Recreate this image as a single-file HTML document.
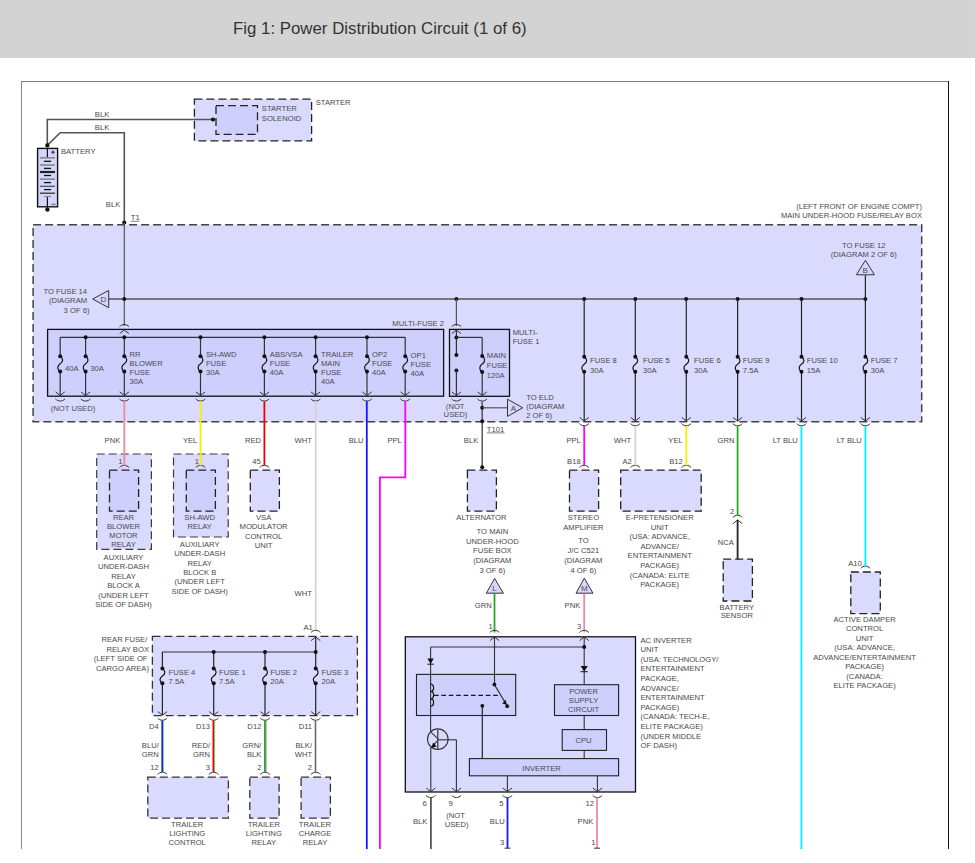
<!DOCTYPE html>
<html><head><meta charset="utf-8"><title>Fig 1: Power Distribution Circuit</title>
<style>html,body{margin:0;padding:0;background:#fff;width:975px;height:863px;overflow:hidden;position:relative;font-family:"Liberation Sans",sans-serif}</style>
</head><body>
<svg width="975" height="863" viewBox="0 0 975 863" style="position:absolute;left:0;top:0" font-family="Liberation Sans, sans-serif">
<defs><clipPath id="c"><rect x="0" y="0" width="975" height="849"/></clipPath></defs>
<rect x="0" y="0" width="975" height="58" fill="#d3d3d3"/>
<text x="233" y="33.8" font-size="16.84" fill="#333">Fig 1: Power Distribution Circuit (1 of 6)</text>
<rect x="21" y="81" width="1" height="768" fill="#8a8a8a"/>
<rect x="21" y="81" width="928" height="1" fill="#7a7a7a"/>
<rect x="948" y="81" width="1" height="768" fill="#111"/>
<g clip-path="url(#c)">
<rect x="194.4" y="99.2" width="117.2" height="41.6" fill="#dadafe" stroke="#222" stroke-width="1.3" stroke-dasharray="8 4"/>
<rect x="216" y="105.7" width="41.5" height="28.6" fill="#cfcffe" stroke="#222" stroke-width="1.3" stroke-dasharray="8 4"/>
<text x="315.7" y="104.8" font-size="7.65" fill="#4a4a4a">STARTER</text>
<text x="261.8" y="110.9" font-size="7.65" fill="#4a4a4a">STARTER</text>
<text x="261.8" y="120.8" font-size="7.65" fill="#4a4a4a">SOLENOID</text>
<polyline points="47.3,145.4 47.3,119.5 213,119.5" fill="none" stroke="#555" stroke-width="1.6"/>
<polyline points="47.3,145.4 60.2,132.8 124.3,132.8 124.3,222.5" fill="none" stroke="#555" stroke-width="1.6"/>
<circle cx="47.3" cy="145.4" r="2.1" fill="#111"/>
<circle cx="213" cy="119.5" r="2.1" fill="#111"/>
<text x="94.8" y="116.8" font-size="7.65" fill="#4a4a4a">BLK</text>
<text x="94.8" y="129.7" font-size="7.65" fill="#4a4a4a">BLK</text>
<text x="105.8" y="206.9" font-size="7.65" fill="#4a4a4a">BLK</text>
<text x="130.8" y="220" font-size="7.65" fill="#4a4a4a">T1</text>
<line x1="130.8" y1="221.3" x2="139.5" y2="221.3" stroke="#4a4a4a" stroke-width="0.7"/>
<circle cx="124.3" cy="222.5" r="2.1" fill="#111"/>
<rect x="37.6" y="148.4" width="20" height="58.4" fill="#d6d6fc" stroke="#111" stroke-width="1.4"/>
<line x1="47.4" y1="148.4" x2="47.4" y2="157.8" stroke="#111" stroke-width="1.2"/>
<line x1="47.4" y1="196.5" x2="47.4" y2="206.8" stroke="#111" stroke-width="1.2"/>
<line x1="40" y1="157.8" x2="55" y2="157.8" stroke="#888" stroke-width="1.6"/>
<line x1="40" y1="165" x2="55" y2="165" stroke="#888" stroke-width="1.6"/>
<line x1="40" y1="172" x2="55" y2="172" stroke="#222" stroke-width="2.2"/>
<line x1="40" y1="179.1" x2="55" y2="179.1" stroke="#888" stroke-width="1.6"/>
<line x1="40" y1="186.3" x2="55" y2="186.3" stroke="#555" stroke-width="1.3"/>
<line x1="40" y1="193.2" x2="55" y2="193.2" stroke="#333" stroke-width="1.3"/>
<line x1="43.9" y1="161.3" x2="51.1" y2="161.3" stroke="#111" stroke-width="1.3"/>
<line x1="43.9" y1="168.4" x2="51.1" y2="168.4" stroke="#111" stroke-width="1.3"/>
<line x1="43.9" y1="175.5" x2="51.1" y2="175.5" stroke="#111" stroke-width="1.3"/>
<line x1="43.9" y1="182.6" x2="51.1" y2="182.6" stroke="#111" stroke-width="1.3"/>
<line x1="43.9" y1="189.6" x2="51.1" y2="189.6" stroke="#111" stroke-width="1.3"/>
<line x1="43.9" y1="196.5" x2="51.1" y2="196.5" stroke="#888" stroke-width="1.2"/>
<line x1="51" y1="152.2" x2="55" y2="152.2" stroke="#222" stroke-width="0.9"/>
<line x1="53" y1="150.2" x2="53" y2="154.2" stroke="#222" stroke-width="0.9"/>
<line x1="51.5" y1="204.3" x2="55.5" y2="204.3" stroke="#555" stroke-width="1"/>
<line x1="47.4" y1="206.8" x2="47.4" y2="209.6" stroke="#111" stroke-width="1.2"/>
<circle cx="47.4" cy="209.6" r="2.2" fill="#111"/>
<text x="61" y="153.7" font-size="7.65" fill="#4a4a4a">BATTERY</text>
<text x="922" y="209.2" text-anchor="end" font-size="7.65" fill="#4a4a4a">(LEFT FRONT OF ENGINE COMPT)</text>
<text x="922" y="217.7" text-anchor="end" font-size="7.65" fill="#4a4a4a">MAIN UNDER-HOOD FUSE/RELAY BOX</text>
<rect x="33.1" y="224.8" width="888.6" height="197" fill="#dadafe" stroke="#444" stroke-width="1.5" stroke-dasharray="8 4"/>
<line x1="124.3" y1="222.5" x2="124.3" y2="326" stroke="#555" stroke-width="1.2"/>
<text x="863.8" y="247.7" text-anchor="middle" font-size="7.65" fill="#4a4a4a">TO FUSE 12</text>
<text x="863.8" y="256.7" text-anchor="middle" font-size="7.65" fill="#4a4a4a">(DIAGRAM 2 OF 6)</text>
<line x1="108.7" y1="299" x2="865.4" y2="299" stroke="#555" stroke-width="1.3"/>
<polygon points="865.4,260.3 856.4,274.8 874.4,274.8" fill="#d6d6fc" stroke="#333" stroke-width="1"/>
<text x="865.2" y="273" text-anchor="middle" font-size="8" fill="#4a4a4a">B</text>
<polygon points="92.7,299 108.7,290.4 108.7,307.7" fill="#d6d6fc" stroke="#333" stroke-width="1"/>
<text x="103.3" y="302" text-anchor="middle" font-size="8" fill="#4a4a4a">D</text>
<text x="43.5" y="293.9" font-size="7.65" fill="#4a4a4a">TO FUSE 14</text>
<text x="48.9" y="303.2" font-size="7.65" fill="#4a4a4a">(DIAGRAM</text>
<text x="63.6" y="312.6" font-size="7.65" fill="#4a4a4a">3 OF 6)</text>
<circle cx="124.3" cy="299" r="2" fill="#111"/>
<circle cx="456.4" cy="299" r="2" fill="#111"/>
<circle cx="584.2" cy="299" r="2" fill="#111"/>
<circle cx="635.3" cy="299" r="2" fill="#111"/>
<circle cx="686.1" cy="299" r="2" fill="#111"/>
<circle cx="737.6" cy="299" r="2" fill="#111"/>
<circle cx="801.5" cy="299" r="2" fill="#111"/>
<circle cx="865.4" cy="299" r="2" fill="#111"/>
<rect x="47.6" y="329.4" width="396" height="66.8" fill="#cfcffe" stroke="#111" stroke-width="1.3"/>
<text x="444" y="326" text-anchor="end" font-size="7.65" fill="#4a4a4a">MULTI-FUSE 2</text>
<line x1="60.2" y1="337.3" x2="405.2" y2="337.3" stroke="#333" stroke-width="1.2"/>
<line x1="60.2" y1="337.3" x2="60.2" y2="356.2" stroke="#333" stroke-width="1.2"/>
<line x1="60.2" y1="371.5" x2="60.2" y2="395.5" stroke="#333" stroke-width="1.2"/>
<circle cx="60.2" cy="356.2" r="2" fill="#111"/>
<circle cx="60.2" cy="371.5" r="2" fill="#111"/>
<path d="M60.2,356.2 C63.400000000000006,358.2 63.400000000000006,361.85 60.2,363.85 C57.0,365.85 57.0,369.5 60.2,371.5" fill="none" stroke="#111" stroke-width="1.2"/>
<polyline points="55.6,391.9 60.2,395.5 64.8,391.9" fill="none" stroke="#333" stroke-width="1"/>
<path d="M55.400000000000006,398.8 C57.800000000000004,401.79 62.6,401.79 65.0,398.8" fill="none" stroke="#333" stroke-width="1"/>
<line x1="85.6" y1="337.3" x2="85.6" y2="356.2" stroke="#333" stroke-width="1.2"/>
<line x1="85.6" y1="371.5" x2="85.6" y2="395.5" stroke="#333" stroke-width="1.2"/>
<circle cx="85.6" cy="356.2" r="2" fill="#111"/>
<circle cx="85.6" cy="371.5" r="2" fill="#111"/>
<path d="M85.6,356.2 C88.8,358.2 88.8,361.85 85.6,363.85 C82.39999999999999,365.85 82.39999999999999,369.5 85.6,371.5" fill="none" stroke="#111" stroke-width="1.2"/>
<polyline points="81.0,391.9 85.6,395.5 90.19999999999999,391.9" fill="none" stroke="#333" stroke-width="1"/>
<path d="M80.8,398.8 C83.19999999999999,401.79 88.0,401.79 90.39999999999999,398.8" fill="none" stroke="#333" stroke-width="1"/>
<circle cx="85.6" cy="337.3" r="2" fill="#111"/>
<line x1="124.3" y1="337.3" x2="124.3" y2="356.2" stroke="#333" stroke-width="1.2"/>
<line x1="124.3" y1="371.5" x2="124.3" y2="395.5" stroke="#333" stroke-width="1.2"/>
<circle cx="124.3" cy="356.2" r="2" fill="#111"/>
<circle cx="124.3" cy="371.5" r="2" fill="#111"/>
<path d="M124.3,356.2 C127.5,358.2 127.5,361.85 124.3,363.85 C121.1,365.85 121.1,369.5 124.3,371.5" fill="none" stroke="#111" stroke-width="1.2"/>
<polyline points="119.7,391.9 124.3,395.5 128.9,391.9" fill="none" stroke="#333" stroke-width="1"/>
<path d="M119.5,398.8 C121.89999999999999,401.79 126.7,401.79 129.1,398.8" fill="none" stroke="#333" stroke-width="1"/>
<circle cx="124.3" cy="337.3" r="2" fill="#111"/>
<line x1="200.5" y1="337.3" x2="200.5" y2="356.2" stroke="#333" stroke-width="1.2"/>
<line x1="200.5" y1="371.5" x2="200.5" y2="395.5" stroke="#333" stroke-width="1.2"/>
<circle cx="200.5" cy="356.2" r="2" fill="#111"/>
<circle cx="200.5" cy="371.5" r="2" fill="#111"/>
<path d="M200.5,356.2 C203.7,358.2 203.7,361.85 200.5,363.85 C197.3,365.85 197.3,369.5 200.5,371.5" fill="none" stroke="#111" stroke-width="1.2"/>
<polyline points="195.9,391.9 200.5,395.5 205.1,391.9" fill="none" stroke="#333" stroke-width="1"/>
<path d="M195.7,398.8 C198.1,401.79 202.9,401.79 205.3,398.8" fill="none" stroke="#333" stroke-width="1"/>
<circle cx="200.5" cy="337.3" r="2" fill="#111"/>
<line x1="264.4" y1="337.3" x2="264.4" y2="356.2" stroke="#333" stroke-width="1.2"/>
<line x1="264.4" y1="371.5" x2="264.4" y2="395.5" stroke="#333" stroke-width="1.2"/>
<circle cx="264.4" cy="356.2" r="2" fill="#111"/>
<circle cx="264.4" cy="371.5" r="2" fill="#111"/>
<path d="M264.4,356.2 C267.59999999999997,358.2 267.59999999999997,361.85 264.4,363.85 C261.2,365.85 261.2,369.5 264.4,371.5" fill="none" stroke="#111" stroke-width="1.2"/>
<polyline points="259.79999999999995,391.9 264.4,395.5 269.0,391.9" fill="none" stroke="#333" stroke-width="1"/>
<path d="M259.59999999999997,398.8 C262.0,401.79 266.79999999999995,401.79 269.2,398.8" fill="none" stroke="#333" stroke-width="1"/>
<circle cx="264.4" cy="337.3" r="2" fill="#111"/>
<line x1="315.6" y1="337.3" x2="315.6" y2="356.2" stroke="#333" stroke-width="1.2"/>
<line x1="315.6" y1="371.5" x2="315.6" y2="395.5" stroke="#333" stroke-width="1.2"/>
<circle cx="315.6" cy="356.2" r="2" fill="#111"/>
<circle cx="315.6" cy="371.5" r="2" fill="#111"/>
<path d="M315.6,356.2 C318.8,358.2 318.8,361.85 315.6,363.85 C312.40000000000003,365.85 312.40000000000003,369.5 315.6,371.5" fill="none" stroke="#111" stroke-width="1.2"/>
<polyline points="311.0,391.9 315.6,395.5 320.20000000000005,391.9" fill="none" stroke="#333" stroke-width="1"/>
<path d="M310.8,398.8 C313.20000000000005,401.79 318.0,401.79 320.40000000000003,398.8" fill="none" stroke="#333" stroke-width="1"/>
<circle cx="315.6" cy="337.3" r="2" fill="#111"/>
<line x1="367" y1="337.3" x2="367" y2="356.2" stroke="#333" stroke-width="1.2"/>
<line x1="367" y1="371.5" x2="367" y2="395.5" stroke="#333" stroke-width="1.2"/>
<circle cx="367" cy="356.2" r="2" fill="#111"/>
<circle cx="367" cy="371.5" r="2" fill="#111"/>
<path d="M367,356.2 C370.2,358.2 370.2,361.85 367,363.85 C363.8,365.85 363.8,369.5 367,371.5" fill="none" stroke="#111" stroke-width="1.2"/>
<polyline points="362.4,391.9 367,395.5 371.6,391.9" fill="none" stroke="#333" stroke-width="1"/>
<path d="M362.2,398.8 C364.6,401.79 369.4,401.79 371.8,398.8" fill="none" stroke="#333" stroke-width="1"/>
<circle cx="367" cy="337.3" r="2" fill="#111"/>
<line x1="405.2" y1="337.3" x2="405.2" y2="356.2" stroke="#333" stroke-width="1.2"/>
<line x1="405.2" y1="371.5" x2="405.2" y2="395.5" stroke="#333" stroke-width="1.2"/>
<circle cx="405.2" cy="356.2" r="2" fill="#111"/>
<circle cx="405.2" cy="371.5" r="2" fill="#111"/>
<path d="M405.2,356.2 C408.4,358.2 408.4,361.85 405.2,363.85 C402.0,365.85 402.0,369.5 405.2,371.5" fill="none" stroke="#111" stroke-width="1.2"/>
<polyline points="400.59999999999997,391.9 405.2,395.5 409.8,391.9" fill="none" stroke="#333" stroke-width="1"/>
<path d="M400.4,398.8 C402.8,401.79 407.59999999999997,401.79 410.0,398.8" fill="none" stroke="#333" stroke-width="1"/>
<path d="M119.5,326.8 C121.89999999999999,323.81 126.7,323.81 129.1,326.8" fill="none" stroke="#333" stroke-width="1"/>
<polyline points="119.7,333.6 124.3,330 128.9,333.6" fill="none" stroke="#333" stroke-width="1"/>
<text x="64.9" y="371" font-size="7.65" fill="#4a4a4a">40A</text>
<text x="90.2" y="371" font-size="7.65" fill="#4a4a4a">30A</text>
<text x="129.6" y="356.6" font-size="7.65" fill="#4a4a4a">RR</text>
<text x="129.6" y="365.8" font-size="7.65" fill="#4a4a4a">BLOWER</text>
<text x="129.6" y="375.0" font-size="7.65" fill="#4a4a4a">FUSE</text>
<text x="129.6" y="384.2" font-size="7.65" fill="#4a4a4a">30A</text>
<text x="205.9" y="356.6" font-size="7.65" fill="#4a4a4a">SH-AWD</text>
<text x="205.9" y="365.8" font-size="7.65" fill="#4a4a4a">FUSE</text>
<text x="205.9" y="375.0" font-size="7.65" fill="#4a4a4a">30A</text>
<text x="269.8" y="356.8" font-size="7.65" fill="#4a4a4a">ABS/VSA</text>
<text x="269.8" y="365.9" font-size="7.65" fill="#4a4a4a">FUSE</text>
<text x="269.8" y="375.0" font-size="7.65" fill="#4a4a4a">40A</text>
<text x="321" y="356.8" font-size="7.65" fill="#4a4a4a">TRAILER</text>
<text x="321" y="365.9" font-size="7.65" fill="#4a4a4a">MAIN</text>
<text x="321" y="375.0" font-size="7.65" fill="#4a4a4a">FUSE</text>
<text x="321" y="384.1" font-size="7.65" fill="#4a4a4a">40A</text>
<text x="372" y="356.8" font-size="7.65" fill="#4a4a4a">OP2</text>
<text x="372" y="365.9" font-size="7.65" fill="#4a4a4a">FUSE</text>
<text x="372" y="375.0" font-size="7.65" fill="#4a4a4a">40A</text>
<text x="410.6" y="358.0" font-size="7.65" fill="#4a4a4a">OP1</text>
<text x="410.6" y="367.2" font-size="7.65" fill="#4a4a4a">FUSE</text>
<text x="410.6" y="376.4" font-size="7.65" fill="#4a4a4a">40A</text>
<text x="50.8" y="410.8" font-size="7.65" fill="#4a4a4a">(NOT USED)</text>
<rect x="449.5" y="329.4" width="60" height="66.9" fill="#cfcffe" stroke="#111" stroke-width="1.3"/>
<text x="512.7" y="335.1" font-size="7.65" fill="#4a4a4a">MULTI-</text>
<text x="512.7" y="343.8" font-size="7.65" fill="#4a4a4a">FUSE 1</text>
<line x1="456.4" y1="299" x2="456.4" y2="326" stroke="#555" stroke-width="1.2"/>
<path d="M451.59999999999997,326.8 C454.0,323.81 458.79999999999995,323.81 461.2,326.8" fill="none" stroke="#333" stroke-width="1"/>
<polyline points="451.79999999999995,333.6 456.4,330 461.0,333.6" fill="none" stroke="#333" stroke-width="1"/>
<line x1="456.4" y1="330" x2="456.4" y2="355" stroke="#333" stroke-width="1.2"/>
<circle cx="456.4" cy="337.4" r="2" fill="#111"/>
<circle cx="456.4" cy="355" r="2" fill="#111"/>
<circle cx="456.4" cy="370.6" r="2" fill="#111"/>
<line x1="456.4" y1="370.6" x2="456.4" y2="395.5" stroke="#333" stroke-width="1.2"/>
<polyline points="451.79999999999995,391.9 456.4,395.5 461.0,391.9" fill="none" stroke="#333" stroke-width="1"/>
<path d="M451.59999999999997,398.8 C454.0,401.79 458.79999999999995,401.79 461.2,398.8" fill="none" stroke="#333" stroke-width="1"/>
<line x1="456.4" y1="337.4" x2="482.2" y2="337.4" stroke="#333" stroke-width="1.2"/>
<line x1="482.2" y1="337.4" x2="482.2" y2="356" stroke="#333" stroke-width="1.2"/>
<line x1="482.2" y1="371.9" x2="482.2" y2="395.5" stroke="#333" stroke-width="1.2"/>
<circle cx="482.2" cy="356" r="2" fill="#111"/>
<circle cx="482.2" cy="371.9" r="2" fill="#111"/>
<path d="M482.2,356 C485.4,358 485.4,361.95 482.2,363.95 C479.0,365.95 479.0,369.9 482.2,371.9" fill="none" stroke="#111" stroke-width="1.2"/>
<polyline points="477.59999999999997,391.9 482.2,395.5 486.8,391.9" fill="none" stroke="#333" stroke-width="1"/>
<path d="M477.4,398.8 C479.8,401.79 484.59999999999997,401.79 487.0,398.8" fill="none" stroke="#333" stroke-width="1"/>
<text x="486.8" y="358.1" font-size="7.65" fill="#4a4a4a">MAIN</text>
<text x="486.8" y="367.9" font-size="7.65" fill="#4a4a4a">FUSE</text>
<text x="486.8" y="377.7" font-size="7.65" fill="#4a4a4a">120A</text>
<text x="455.2" y="408.7" text-anchor="middle" font-size="7.65" fill="#4a4a4a">(NOT</text>
<text x="455.5" y="417.3" text-anchor="middle" font-size="7.65" fill="#4a4a4a">USED)</text>
<line x1="482.2" y1="401.4" x2="482.2" y2="467.3" stroke="#555" stroke-width="1.5"/>
<circle cx="482.2" cy="407.8" r="2" fill="#111"/>
<circle cx="482.2" cy="421.3" r="2" fill="#111"/>
<circle cx="482.2" cy="467.3" r="2" fill="#111"/>
<line x1="482.2" y1="407.8" x2="507.5" y2="407.8" stroke="#555" stroke-width="1.2"/>
<polygon points="507.5,399.2 507.5,416.4 522.7,407.8" fill="#d6d6fc" stroke="#333" stroke-width="1"/>
<text x="513.5" y="410.6" text-anchor="middle" font-size="8" fill="#4a4a4a">A</text>
<text x="526.2" y="400.0" font-size="7.65" fill="#4a4a4a">TO ELD</text>
<text x="526.2" y="409.2" font-size="7.65" fill="#4a4a4a">(DIAGRAM</text>
<text x="526.2" y="418.4" font-size="7.65" fill="#4a4a4a">2 OF 6)</text>
<text x="486.8" y="431.6" font-size="7.65" fill="#4a4a4a">T101</text>
<line x1="486.8" y1="432.9" x2="504.5" y2="432.9" stroke="#4a4a4a" stroke-width="0.7"/>
<line x1="584.2" y1="299" x2="584.2" y2="356.8" stroke="#222" stroke-width="1.2"/>
<line x1="584.2" y1="371.8" x2="584.2" y2="421" stroke="#222" stroke-width="1.2"/>
<circle cx="584.2" cy="356.8" r="2" fill="#111"/>
<circle cx="584.2" cy="371.8" r="2" fill="#111"/>
<path d="M584.2,356.8 C587.4000000000001,358.8 587.4000000000001,362.3 584.2,364.3 C581.0,366.3 581.0,369.8 584.2,371.8" fill="none" stroke="#111" stroke-width="1.2"/>
<polyline points="579.6,417.4 584.2,421 588.8000000000001,417.4" fill="none" stroke="#333" stroke-width="1"/>
<path d="M579.4000000000001,423.5 C581.8000000000001,426.49 586.6,426.49 589.0,423.5" fill="none" stroke="#333" stroke-width="1"/>
<text x="590.1" y="362.5" font-size="7.65" fill="#4a4a4a">FUSE 8</text>
<text x="590.1" y="372.6" font-size="7.65" fill="#4a4a4a">30A</text>
<line x1="635.3" y1="299" x2="635.3" y2="356.8" stroke="#222" stroke-width="1.2"/>
<line x1="635.3" y1="371.8" x2="635.3" y2="421" stroke="#222" stroke-width="1.2"/>
<circle cx="635.3" cy="356.8" r="2" fill="#111"/>
<circle cx="635.3" cy="371.8" r="2" fill="#111"/>
<path d="M635.3,356.8 C638.5,358.8 638.5,362.3 635.3,364.3 C632.0999999999999,366.3 632.0999999999999,369.8 635.3,371.8" fill="none" stroke="#111" stroke-width="1.2"/>
<polyline points="630.6999999999999,417.4 635.3,421 639.9,417.4" fill="none" stroke="#333" stroke-width="1"/>
<path d="M630.5,423.5 C632.9,426.49 637.6999999999999,426.49 640.0999999999999,423.5" fill="none" stroke="#333" stroke-width="1"/>
<text x="643" y="362.5" font-size="7.65" fill="#4a4a4a">FUSE 5</text>
<text x="643" y="372.6" font-size="7.65" fill="#4a4a4a">30A</text>
<line x1="686.3" y1="299" x2="686.3" y2="356.8" stroke="#222" stroke-width="1.2"/>
<line x1="686.3" y1="371.8" x2="686.3" y2="421" stroke="#222" stroke-width="1.2"/>
<circle cx="686.3" cy="356.8" r="2" fill="#111"/>
<circle cx="686.3" cy="371.8" r="2" fill="#111"/>
<path d="M686.3,356.8 C689.5,358.8 689.5,362.3 686.3,364.3 C683.0999999999999,366.3 683.0999999999999,369.8 686.3,371.8" fill="none" stroke="#111" stroke-width="1.2"/>
<polyline points="681.6999999999999,417.4 686.3,421 690.9,417.4" fill="none" stroke="#333" stroke-width="1"/>
<path d="M681.5,423.5 C683.9,426.49 688.6999999999999,426.49 691.0999999999999,423.5" fill="none" stroke="#333" stroke-width="1"/>
<text x="694" y="362.5" font-size="7.65" fill="#4a4a4a">FUSE 6</text>
<text x="694" y="372.6" font-size="7.65" fill="#4a4a4a">30A</text>
<line x1="737.6" y1="299" x2="737.6" y2="356.8" stroke="#222" stroke-width="1.2"/>
<line x1="737.6" y1="371.8" x2="737.6" y2="421" stroke="#222" stroke-width="1.2"/>
<circle cx="737.6" cy="356.8" r="2" fill="#111"/>
<circle cx="737.6" cy="371.8" r="2" fill="#111"/>
<path d="M737.6,356.8 C740.8000000000001,358.8 740.8000000000001,362.3 737.6,364.3 C734.4,366.3 734.4,369.8 737.6,371.8" fill="none" stroke="#111" stroke-width="1.2"/>
<polyline points="733.0,417.4 737.6,421 742.2,417.4" fill="none" stroke="#333" stroke-width="1"/>
<path d="M732.8000000000001,423.5 C735.2,426.49 740.0,426.49 742.4,423.5" fill="none" stroke="#333" stroke-width="1"/>
<text x="742.8" y="362.5" font-size="7.65" fill="#4a4a4a">FUSE 9</text>
<text x="742.8" y="372.6" font-size="7.65" fill="#4a4a4a">7.5A</text>
<line x1="801.5" y1="299" x2="801.5" y2="356.8" stroke="#222" stroke-width="1.2"/>
<line x1="801.5" y1="371.8" x2="801.5" y2="421" stroke="#222" stroke-width="1.2"/>
<circle cx="801.5" cy="356.8" r="2" fill="#111"/>
<circle cx="801.5" cy="371.8" r="2" fill="#111"/>
<path d="M801.5,356.8 C804.7,358.8 804.7,362.3 801.5,364.3 C798.3,366.3 798.3,369.8 801.5,371.8" fill="none" stroke="#111" stroke-width="1.2"/>
<polyline points="796.9,417.4 801.5,421 806.1,417.4" fill="none" stroke="#333" stroke-width="1"/>
<path d="M796.7,423.5 C799.1,426.49 803.9,426.49 806.3,423.5" fill="none" stroke="#333" stroke-width="1"/>
<text x="806.8" y="362.5" font-size="7.65" fill="#4a4a4a">FUSE 10</text>
<text x="806.8" y="372.6" font-size="7.65" fill="#4a4a4a">15A</text>
<line x1="865.4" y1="275.2" x2="865.4" y2="356.8" stroke="#222" stroke-width="1.2"/>
<line x1="865.4" y1="371.8" x2="865.4" y2="421" stroke="#222" stroke-width="1.2"/>
<circle cx="865.4" cy="356.8" r="2" fill="#111"/>
<circle cx="865.4" cy="371.8" r="2" fill="#111"/>
<path d="M865.4,356.8 C868.6,358.8 868.6,362.3 865.4,364.3 C862.1999999999999,366.3 862.1999999999999,369.8 865.4,371.8" fill="none" stroke="#111" stroke-width="1.2"/>
<polyline points="860.8,417.4 865.4,421 870.0,417.4" fill="none" stroke="#333" stroke-width="1"/>
<path d="M860.6,423.5 C863.0,426.49 867.8,426.49 870.1999999999999,423.5" fill="none" stroke="#333" stroke-width="1"/>
<text x="870.8" y="362.5" font-size="7.65" fill="#4a4a4a">FUSE 7</text>
<text x="870.8" y="372.6" font-size="7.65" fill="#4a4a4a">30A</text>
<text x="104.6" y="442.7" font-size="7.65" fill="#4a4a4a">PNK</text>
<text x="182.9" y="442.7" font-size="7.65" fill="#4a4a4a">YEL</text>
<text x="245" y="442.7" font-size="7.65" fill="#4a4a4a">RED</text>
<text x="294.6" y="442.7" font-size="7.65" fill="#4a4a4a">WHT</text>
<text x="348.7" y="442.7" font-size="7.65" fill="#4a4a4a">BLU</text>
<text x="387.4" y="442.7" font-size="7.65" fill="#4a4a4a">PPL</text>
<text x="463.8" y="442.7" font-size="7.65" fill="#4a4a4a">BLK</text>
<text x="566.4" y="442.7" font-size="7.65" fill="#4a4a4a">PPL</text>
<text x="613.7" y="442.7" font-size="7.65" fill="#4a4a4a">WHT</text>
<text x="668.3" y="442.7" font-size="7.65" fill="#4a4a4a">YEL</text>
<text x="717.5" y="442.7" font-size="7.65" fill="#4a4a4a">GRN</text>
<text x="772.7" y="442.7" font-size="7.65" fill="#4a4a4a">LT BLU</text>
<text x="836.7" y="442.7" font-size="7.65" fill="#4a4a4a">LT BLU</text>
<rect x="96.7" y="454" width="54.7" height="95.3" fill="#dadafe" stroke="#3a3a3a" stroke-width="1.2" stroke-dasharray="8 4"/>
<rect x="109.5" y="470.2" width="29.1" height="41" fill="#cfcffe" stroke="#222" stroke-width="1.3" stroke-dasharray="8 4"/>
<text x="118.2" y="463.8" font-size="7.65" fill="#4a4a4a">1</text>
<path d="M119.5,467.6 C121.89999999999999,464.61 126.7,464.61 129.1,467.6" fill="none" stroke="#333" stroke-width="1"/>
<text x="123.5" y="519.8" text-anchor="middle" font-size="7.65" fill="#4a4a4a">REAR</text>
<text x="123.5" y="529.0" text-anchor="middle" font-size="7.65" fill="#4a4a4a">BLOWER</text>
<text x="123.5" y="538.2" text-anchor="middle" font-size="7.65" fill="#4a4a4a">MOTOR</text>
<text x="123.5" y="547.4" text-anchor="middle" font-size="7.65" fill="#4a4a4a">RELAY</text>
<text x="123.5" y="559.9" text-anchor="middle" font-size="7.65" fill="#4a4a4a">AUXILIARY</text>
<text x="123.5" y="569.4" text-anchor="middle" font-size="7.65" fill="#4a4a4a">UNDER-DASH</text>
<text x="123.5" y="578.9" text-anchor="middle" font-size="7.65" fill="#4a4a4a">RELAY</text>
<text x="123.5" y="588.4" text-anchor="middle" font-size="7.65" fill="#4a4a4a">BLOCK A</text>
<text x="123.5" y="597.9" text-anchor="middle" font-size="7.65" fill="#4a4a4a">(UNDER LEFT</text>
<text x="123.5" y="607.4" text-anchor="middle" font-size="7.65" fill="#4a4a4a">SIDE OF DASH)</text>
<rect x="173.5" y="454" width="54.7" height="83" fill="#dadafe" stroke="#3a3a3a" stroke-width="1.2" stroke-dasharray="8 4"/>
<rect x="186.3" y="470.2" width="29.1" height="41" fill="#cfcffe" stroke="#222" stroke-width="1.3" stroke-dasharray="8 4"/>
<text x="194.7" y="463.8" font-size="7.65" fill="#4a4a4a">1</text>
<path d="M195.7,467.6 C198.1,464.61 202.9,464.61 205.3,467.6" fill="none" stroke="#333" stroke-width="1"/>
<text x="199.7" y="519.8" text-anchor="middle" font-size="7.65" fill="#4a4a4a">SH-AWD</text>
<text x="199.7" y="529.0" text-anchor="middle" font-size="7.65" fill="#4a4a4a">RELAY</text>
<text x="199.7" y="546.8" text-anchor="middle" font-size="7.65" fill="#4a4a4a">AUXILIARY</text>
<text x="199.7" y="556.16" text-anchor="middle" font-size="7.65" fill="#4a4a4a">UNDER-DASH</text>
<text x="199.7" y="565.52" text-anchor="middle" font-size="7.65" fill="#4a4a4a">RELAY</text>
<text x="199.7" y="574.88" text-anchor="middle" font-size="7.65" fill="#4a4a4a">BLOCK B</text>
<text x="199.7" y="584.24" text-anchor="middle" font-size="7.65" fill="#4a4a4a">(UNDER LEFT</text>
<text x="199.7" y="593.6" text-anchor="middle" font-size="7.65" fill="#4a4a4a">SIDE OF DASH)</text>
<rect x="250.3" y="470.2" width="29.1" height="41" fill="#dadafe" stroke="#222" stroke-width="1.3" stroke-dasharray="8 4"/>
<text x="252.3" y="463.8" font-size="7.65" fill="#4a4a4a">45</text>
<path d="M259.59999999999997,467.6 C262.0,464.61 266.79999999999995,464.61 269.2,467.6" fill="none" stroke="#333" stroke-width="1"/>
<text x="263.6" y="519.8" text-anchor="middle" font-size="7.65" fill="#4a4a4a">VSA</text>
<text x="263.6" y="529.2" text-anchor="middle" font-size="7.65" fill="#4a4a4a">MODULATOR</text>
<text x="263.6" y="538.6" text-anchor="middle" font-size="7.65" fill="#4a4a4a">CONTROL</text>
<text x="263.6" y="548.0" text-anchor="middle" font-size="7.65" fill="#4a4a4a">UNIT</text>
<text x="294.6" y="596" font-size="7.65" fill="#4a4a4a">WHT</text>
<rect x="467.4" y="470.2" width="29" height="41" fill="#dadafe" stroke="#222" stroke-width="1.3" stroke-dasharray="8 4"/>
<text x="481.4" y="519.8" text-anchor="middle" font-size="7.65" fill="#4a4a4a">ALTERNATOR</text>
<text x="492.4" y="533.8" text-anchor="middle" font-size="7.65" fill="#4a4a4a">TO MAIN</text>
<text x="492.4" y="543.52" text-anchor="middle" font-size="7.65" fill="#4a4a4a">UNDER-HOOD</text>
<text x="492.4" y="553.24" text-anchor="middle" font-size="7.65" fill="#4a4a4a">FUSE BOX</text>
<text x="492.4" y="562.96" text-anchor="middle" font-size="7.65" fill="#4a4a4a">(DIAGRAM</text>
<text x="492.4" y="572.68" text-anchor="middle" font-size="7.65" fill="#4a4a4a">3 OF 6)</text>
<polygon points="494.6,578.4 486.3,593.2 503.4,593.2" fill="#d6d6fc" stroke="#333" stroke-width="1"/>
<text x="494.6" y="591.2" text-anchor="middle" font-size="8" fill="#4a4a4a">L</text>
<line x1="494.5" y1="593.6" x2="494.5" y2="632.5" stroke="#26aa26" stroke-width="1.8"/>
<text x="474.8" y="608.4" font-size="7.65" fill="#4a4a4a">GRN</text>
<rect x="569.5" y="470.2" width="29.1" height="41" fill="#dadafe" stroke="#222" stroke-width="1.3" stroke-dasharray="8 4"/>
<text x="567.1" y="463.8" font-size="7.65" fill="#4a4a4a">B18</text>
<path d="M579.4000000000001,467.6 C581.8000000000001,464.61 586.6,464.61 589.0,467.6" fill="none" stroke="#333" stroke-width="1"/>
<text x="583.4" y="519.8" text-anchor="middle" font-size="7.65" fill="#4a4a4a">STEREO</text>
<text x="583.4" y="529.5" text-anchor="middle" font-size="7.65" fill="#4a4a4a">AMPLIFIER</text>
<text x="583.4" y="543.4" text-anchor="middle" font-size="7.65" fill="#4a4a4a">TO</text>
<text x="583.4" y="553.1" text-anchor="middle" font-size="7.65" fill="#4a4a4a">J/C C521</text>
<text x="583.4" y="562.8" text-anchor="middle" font-size="7.65" fill="#4a4a4a">(DIAGRAM</text>
<text x="583.4" y="572.5" text-anchor="middle" font-size="7.65" fill="#4a4a4a">4 OF 6)</text>
<polygon points="584.3,578.2 576,593.2 593,593.2" fill="#d6d6fc" stroke="#333" stroke-width="1"/>
<text x="584.3" y="591.2" text-anchor="middle" font-size="8" fill="#4a4a4a">M</text>
<line x1="584.2" y1="593.6" x2="584.2" y2="632.5" stroke="#f4879f" stroke-width="1.8"/>
<text x="564.6" y="608.4" font-size="7.65" fill="#4a4a4a">PNK</text>
<rect x="620.7" y="470.2" width="80.5" height="41" fill="#dadafe" stroke="#222" stroke-width="1.3" stroke-dasharray="8 4"/>
<text x="622.5" y="463.8" font-size="7.65" fill="#4a4a4a">A2</text>
<path d="M630.5,467.6 C632.9,464.61 637.6999999999999,464.61 640.0999999999999,467.6" fill="none" stroke="#333" stroke-width="1"/>
<text x="669.2" y="463.8" font-size="7.65" fill="#4a4a4a">B12</text>
<path d="M681.5,467.6 C683.9,464.61 688.6999999999999,464.61 691.0999999999999,467.6" fill="none" stroke="#333" stroke-width="1"/>
<text x="659.7" y="519.9" text-anchor="middle" font-size="7.65" fill="#4a4a4a">E-PRETENSIONER</text>
<text x="659.7" y="529.53" text-anchor="middle" font-size="7.65" fill="#4a4a4a">UNIT</text>
<text x="659.7" y="539.16" text-anchor="middle" font-size="7.65" fill="#4a4a4a">(USA: ADVANCE,</text>
<text x="659.7" y="548.79" text-anchor="middle" font-size="7.65" fill="#4a4a4a">ADVANCE/</text>
<text x="659.7" y="558.42" text-anchor="middle" font-size="7.65" fill="#4a4a4a">ENTERTAINMENT</text>
<text x="659.7" y="568.05" text-anchor="middle" font-size="7.65" fill="#4a4a4a">PACKAGE)</text>
<text x="659.7" y="577.68" text-anchor="middle" font-size="7.65" fill="#4a4a4a">(CANADA: ELITE</text>
<text x="659.7" y="587.31" text-anchor="middle" font-size="7.65" fill="#4a4a4a">PACKAGE)</text>
<text x="730" y="514.1" font-size="7.65" fill="#4a4a4a">2</text>
<path d="M732.8000000000001,517.5 C735.2,514.51 740.0,514.51 742.4,517.5" fill="none" stroke="#333" stroke-width="1"/>
<polyline points="733.0,523.6 737.6,520 742.2,523.6" fill="none" stroke="#333" stroke-width="1"/>
<line x1="737.6" y1="520" x2="737.6" y2="559.2" stroke="#222" stroke-width="1.8"/>
<text x="717.7" y="545.1" font-size="7.65" fill="#4a4a4a">NCA</text>
<rect x="723.2" y="559.2" width="29.2" height="41.8" fill="#dadafe" stroke="#222" stroke-width="1.3" stroke-dasharray="8 4"/>
<text x="736.8" y="609.5" text-anchor="middle" font-size="7.65" fill="#4a4a4a">BATTERY</text>
<text x="736.8" y="618.2" text-anchor="middle" font-size="7.65" fill="#4a4a4a">SENSOR</text>
<text x="848.2" y="565.6" font-size="7.65" fill="#4a4a4a">A10</text>
<path d="M860.6,568.4 C863.0,565.41 867.8,565.41 870.1999999999999,568.4" fill="none" stroke="#333" stroke-width="1"/>
<rect x="850.8" y="572" width="29.5" height="41.6" fill="#dadafe" stroke="#222" stroke-width="1.3" stroke-dasharray="8 4"/>
<text x="864.6" y="621.5" text-anchor="middle" font-size="7.65" fill="#4a4a4a">ACTIVE DAMPER</text>
<text x="864.6" y="631.02" text-anchor="middle" font-size="7.65" fill="#4a4a4a">CONTROL</text>
<text x="864.6" y="640.54" text-anchor="middle" font-size="7.65" fill="#4a4a4a">UNIT</text>
<text x="864.6" y="650.06" text-anchor="middle" font-size="7.65" fill="#4a4a4a">(USA: ADVANCE,</text>
<text x="864.6" y="659.58" text-anchor="middle" font-size="7.65" fill="#4a4a4a">ADVANCE/ENTERTAINMENT</text>
<text x="864.6" y="669.1" text-anchor="middle" font-size="7.65" fill="#4a4a4a">PACKAGE)</text>
<text x="864.6" y="678.62" text-anchor="middle" font-size="7.65" fill="#4a4a4a">(CANADA:</text>
<text x="864.6" y="688.14" text-anchor="middle" font-size="7.65" fill="#4a4a4a">ELITE PACKAGE)</text>
<line x1="124.3" y1="401.3" x2="124.3" y2="465.5" stroke="#f4879f" stroke-width="1.8"/>
<line x1="200.5" y1="401.3" x2="200.5" y2="465.5" stroke="#f4f000" stroke-width="1.8"/>
<line x1="264.4" y1="401.3" x2="264.4" y2="465.5" stroke="#f00000" stroke-width="1.8"/>
<line x1="315.7" y1="401.3" x2="315.7" y2="631" stroke="#d4d4d4" stroke-width="1.8"/>
<line x1="366.8" y1="401.3" x2="366.8" y2="849" stroke="#1818ff" stroke-width="1.8"/>
<polyline points="405.3,401.3 405.3,477.4 379.9,477.4 379.9,849" fill="none" stroke="#ff00ff" stroke-width="1.8"/>
<line x1="584.2" y1="426" x2="584.2" y2="465.5" stroke="#ff00ff" stroke-width="1.8"/>
<line x1="635.3" y1="426" x2="635.3" y2="465.5" stroke="#d4d4d4" stroke-width="1.8"/>
<line x1="686.3" y1="426" x2="686.3" y2="465.5" stroke="#f4f000" stroke-width="1.8"/>
<line x1="737.6" y1="426" x2="737.6" y2="515.8" stroke="#26aa26" stroke-width="1.8"/>
<line x1="801.4" y1="426" x2="801.4" y2="849" stroke="#00ecff" stroke-width="1.8"/>
<line x1="865.4" y1="426" x2="865.4" y2="567" stroke="#00ecff" stroke-width="1.8"/>
<text x="303.5" y="630" font-size="7.65" fill="#4a4a4a">A1</text>
<path d="M310.9,632.6 C313.3,629.61 318.09999999999997,629.61 320.5,632.6" fill="none" stroke="#333" stroke-width="1"/>
<rect x="152.4" y="636.4" width="205" height="79.2" fill="#dadafe" stroke="#333" stroke-width="1.3" stroke-dasharray="8 4"/>
<polyline points="311.09999999999997,640.6 315.7,637 320.3,640.6" fill="none" stroke="#333" stroke-width="1"/>
<text x="147.3" y="641.9" text-anchor="end" font-size="7.65" fill="#4a4a4a">REAR FUSE/</text>
<text x="149" y="651.5" text-anchor="end" font-size="7.65" fill="#4a4a4a">RELAY BOX</text>
<text x="147.5" y="661.3" text-anchor="end" font-size="7.65" fill="#4a4a4a">(LEFT SIDE OF</text>
<text x="149" y="670.6" text-anchor="end" font-size="7.65" fill="#4a4a4a">CARGO AREA)</text>
<line x1="162.4" y1="652" x2="315.7" y2="652" stroke="#333" stroke-width="1.2"/>
<line x1="162.4" y1="652" x2="162.4" y2="668.6" stroke="#222" stroke-width="1.2"/>
<line x1="162.4" y1="683.3" x2="162.4" y2="715" stroke="#222" stroke-width="1.2"/>
<circle cx="162.4" cy="668.6" r="2" fill="#111"/>
<circle cx="162.4" cy="683.3" r="2" fill="#111"/>
<path d="M162.4,668.6 C165.6,670.6 165.6,673.95 162.4,675.95 C159.20000000000002,677.95 159.20000000000002,681.3 162.4,683.3" fill="none" stroke="#111" stroke-width="1.2"/>
<polyline points="157.8,711.6 162.4,715.2 167.0,711.6" fill="none" stroke="#333" stroke-width="1"/>
<path d="M157.6,718 C160.0,720.99 164.8,720.99 167.20000000000002,718" fill="none" stroke="#333" stroke-width="1"/>
<text x="168.6" y="674.5" font-size="7.65" fill="#4a4a4a">FUSE 4</text>
<text x="168.6" y="683.6" font-size="7.65" fill="#4a4a4a">7.5A</text>
<text x="158.8" y="728.7" text-anchor="end" font-size="7.65" fill="#4a4a4a">D4</text>
<text x="158.8" y="748" text-anchor="end" font-size="7.65" fill="#4a4a4a">BLU/</text>
<text x="158.8" y="756.8" text-anchor="end" font-size="7.65" fill="#4a4a4a">GRN</text>
<text x="158.8" y="769.7" text-anchor="end" font-size="7.65" fill="#4a4a4a">12</text>
<path d="M157.6,774.5 C160.0,771.51 164.8,771.51 167.20000000000002,774.5" fill="none" stroke="#333" stroke-width="1"/>
<line x1="213.7" y1="652" x2="213.7" y2="668.6" stroke="#222" stroke-width="1.2"/>
<line x1="213.7" y1="683.3" x2="213.7" y2="715" stroke="#222" stroke-width="1.2"/>
<circle cx="213.7" cy="668.6" r="2" fill="#111"/>
<circle cx="213.7" cy="683.3" r="2" fill="#111"/>
<path d="M213.7,668.6 C216.89999999999998,670.6 216.89999999999998,673.95 213.7,675.95 C210.5,677.95 210.5,681.3 213.7,683.3" fill="none" stroke="#111" stroke-width="1.2"/>
<circle cx="213.7" cy="652" r="2" fill="#111"/>
<polyline points="209.1,711.6 213.7,715.2 218.29999999999998,711.6" fill="none" stroke="#333" stroke-width="1"/>
<path d="M208.89999999999998,718 C211.29999999999998,720.99 216.1,720.99 218.5,718" fill="none" stroke="#333" stroke-width="1"/>
<text x="219" y="674.5" font-size="7.65" fill="#4a4a4a">FUSE 1</text>
<text x="219" y="683.6" font-size="7.65" fill="#4a4a4a">7.5A</text>
<text x="210.1" y="728.7" text-anchor="end" font-size="7.65" fill="#4a4a4a">D13</text>
<text x="210.1" y="748" text-anchor="end" font-size="7.65" fill="#4a4a4a">RED/</text>
<text x="210.1" y="756.8" text-anchor="end" font-size="7.65" fill="#4a4a4a">GRN</text>
<text x="210.1" y="769.7" text-anchor="end" font-size="7.65" fill="#4a4a4a">3</text>
<path d="M208.89999999999998,774.5 C211.29999999999998,771.51 216.1,771.51 218.5,774.5" fill="none" stroke="#333" stroke-width="1"/>
<line x1="265" y1="652" x2="265" y2="668.6" stroke="#222" stroke-width="1.2"/>
<line x1="265" y1="683.3" x2="265" y2="715" stroke="#222" stroke-width="1.2"/>
<circle cx="265" cy="668.6" r="2" fill="#111"/>
<circle cx="265" cy="683.3" r="2" fill="#111"/>
<path d="M265,668.6 C268.2,670.6 268.2,673.95 265,675.95 C261.8,677.95 261.8,681.3 265,683.3" fill="none" stroke="#111" stroke-width="1.2"/>
<circle cx="265" cy="652" r="2" fill="#111"/>
<polyline points="260.4,711.6 265,715.2 269.6,711.6" fill="none" stroke="#333" stroke-width="1"/>
<path d="M260.2,718 C262.6,720.99 267.4,720.99 269.8,718" fill="none" stroke="#333" stroke-width="1"/>
<text x="270.3" y="674.5" font-size="7.65" fill="#4a4a4a">FUSE 2</text>
<text x="270.3" y="683.6" font-size="7.65" fill="#4a4a4a">20A</text>
<text x="261.4" y="728.7" text-anchor="end" font-size="7.65" fill="#4a4a4a">D12</text>
<text x="261.4" y="748" text-anchor="end" font-size="7.65" fill="#4a4a4a">GRN/</text>
<text x="261.4" y="756.8" text-anchor="end" font-size="7.65" fill="#4a4a4a">BLK</text>
<text x="261.4" y="769.7" text-anchor="end" font-size="7.65" fill="#4a4a4a">2</text>
<path d="M260.2,774.5 C262.6,771.51 267.4,771.51 269.8,774.5" fill="none" stroke="#333" stroke-width="1"/>
<line x1="315.7" y1="637" x2="315.7" y2="668.6" stroke="#222" stroke-width="1.2"/>
<line x1="315.7" y1="683.3" x2="315.7" y2="715" stroke="#222" stroke-width="1.2"/>
<circle cx="315.7" cy="668.6" r="2" fill="#111"/>
<circle cx="315.7" cy="683.3" r="2" fill="#111"/>
<path d="M315.7,668.6 C318.9,670.6 318.9,673.95 315.7,675.95 C312.5,677.95 312.5,681.3 315.7,683.3" fill="none" stroke="#111" stroke-width="1.2"/>
<circle cx="315.7" cy="652" r="2" fill="#111"/>
<polyline points="311.09999999999997,711.6 315.7,715.2 320.3,711.6" fill="none" stroke="#333" stroke-width="1"/>
<path d="M310.9,718 C313.3,720.99 318.09999999999997,720.99 320.5,718" fill="none" stroke="#333" stroke-width="1"/>
<text x="321.6" y="674.5" font-size="7.65" fill="#4a4a4a">FUSE 3</text>
<text x="321.6" y="683.6" font-size="7.65" fill="#4a4a4a">20A</text>
<text x="312.09999999999997" y="728.7" text-anchor="end" font-size="7.65" fill="#4a4a4a">D11</text>
<text x="312.09999999999997" y="748" text-anchor="end" font-size="7.65" fill="#4a4a4a">BLK/</text>
<text x="312.09999999999997" y="756.8" text-anchor="end" font-size="7.65" fill="#4a4a4a">WHT</text>
<text x="312.09999999999997" y="769.7" text-anchor="end" font-size="7.65" fill="#4a4a4a">2</text>
<path d="M310.9,774.5 C313.3,771.51 318.09999999999997,771.51 320.5,774.5" fill="none" stroke="#333" stroke-width="1"/>
<line x1="162.2" y1="720.5" x2="162.2" y2="772" stroke="#1818ff" stroke-width="1.6"/>
<line x1="163.4" y1="720.5" x2="163.4" y2="772" stroke="#26aa26" stroke-width="0.6"/>
<line x1="213.3" y1="720.5" x2="213.3" y2="772" stroke="#f00000" stroke-width="1.6"/>
<line x1="214.5" y1="720.5" x2="214.5" y2="772" stroke="#26aa26" stroke-width="0.6"/>
<line x1="264.8" y1="720.5" x2="264.8" y2="772" stroke="#26aa26" stroke-width="1.6"/>
<line x1="266" y1="720.5" x2="266" y2="772" stroke="#333" stroke-width="0.6"/>
<line x1="315.5" y1="720.5" x2="315.5" y2="772" stroke="#666" stroke-width="1.6"/>
<line x1="316.7" y1="720.5" x2="316.7" y2="772" stroke="#ddd" stroke-width="0.6"/>
<rect x="147.8" y="777.1" width="80.6" height="41.1" fill="#dadafe" stroke="#333" stroke-width="1.3" stroke-dasharray="8 4"/>
<rect x="249.8" y="777.1" width="29.3" height="41.1" fill="#dadafe" stroke="#333" stroke-width="1.3" stroke-dasharray="8 4"/>
<rect x="301.1" y="777.1" width="29.3" height="41.1" fill="#dadafe" stroke="#333" stroke-width="1.3" stroke-dasharray="8 4"/>
<text x="187.2" y="827.0" text-anchor="middle" font-size="7.65" fill="#4a4a4a">TRAILER</text>
<text x="187.2" y="835.8" text-anchor="middle" font-size="7.65" fill="#4a4a4a">LIGHTING</text>
<text x="187.2" y="844.6" text-anchor="middle" font-size="7.65" fill="#4a4a4a">CONTROL</text>
<text x="263.8" y="827.0" text-anchor="middle" font-size="7.65" fill="#4a4a4a">TRAILER</text>
<text x="263.8" y="835.8" text-anchor="middle" font-size="7.65" fill="#4a4a4a">LIGHTING</text>
<text x="263.8" y="844.6" text-anchor="middle" font-size="7.65" fill="#4a4a4a">RELAY</text>
<text x="315.0" y="827.0" text-anchor="middle" font-size="7.65" fill="#4a4a4a">TRAILER</text>
<text x="315.0" y="835.8" text-anchor="middle" font-size="7.65" fill="#4a4a4a">CHARGE</text>
<text x="315.0" y="844.6" text-anchor="middle" font-size="7.65" fill="#4a4a4a">RELAY</text>
<text x="488.6" y="629.1" font-size="7.65" fill="#4a4a4a">1</text>
<path d="M489.7,632.6 C492.1,629.61 496.9,629.61 499.3,632.6" fill="none" stroke="#333" stroke-width="1"/>
<text x="577" y="629.1" font-size="7.65" fill="#4a4a4a">3</text>
<path d="M579.4000000000001,632.6 C581.8000000000001,629.61 586.6,629.61 589.0,632.6" fill="none" stroke="#333" stroke-width="1"/>
<rect x="405.3" y="636.8" width="230.2" height="155.2" fill="#dadafe" stroke="#111" stroke-width="1.3"/>
<text x="640.5" y="642.6" font-size="7.65" fill="#4a4a4a">AC INVERTER</text>
<text x="640.5" y="652.2" font-size="7.65" fill="#4a4a4a">UNIT</text>
<text x="640.5" y="661.8" font-size="7.65" fill="#4a4a4a">(USA: TECHNOLOGY/</text>
<text x="640.5" y="671.4" font-size="7.65" fill="#4a4a4a">ENTERTAINMENT</text>
<text x="640.5" y="681.0" font-size="7.65" fill="#4a4a4a">PACKAGE,</text>
<text x="640.5" y="690.6" font-size="7.65" fill="#4a4a4a">ADVANCE/</text>
<text x="640.5" y="700.2" font-size="7.65" fill="#4a4a4a">ENTERTAINMENT</text>
<text x="640.5" y="709.8" font-size="7.65" fill="#4a4a4a">PACKAGE)</text>
<text x="640.5" y="719.4" font-size="7.65" fill="#4a4a4a">(CANADA: TECH-E,</text>
<text x="640.5" y="729.0" font-size="7.65" fill="#4a4a4a">ELITE PACKAGE)</text>
<text x="640.5" y="738.6" font-size="7.65" fill="#4a4a4a">(UNDER MIDDLE</text>
<text x="640.5" y="748.2" font-size="7.65" fill="#4a4a4a">OF DASH)</text>
<polyline points="489.9,640.6 494.5,637 499.1,640.6" fill="none" stroke="#333" stroke-width="1"/>
<polyline points="579.6,640.6 584.2,637 588.8000000000001,640.6" fill="none" stroke="#333" stroke-width="1"/>
<line x1="494.5" y1="637" x2="494.5" y2="684.5" stroke="#333" stroke-width="1.1"/>
<line x1="584.2" y1="637" x2="584.2" y2="684.7" stroke="#333" stroke-width="1.1"/>
<line x1="430.6" y1="647" x2="584.2" y2="647" stroke="#333" stroke-width="1.1"/>
<circle cx="584.2" cy="647" r="2" fill="#111"/>
<line x1="430.6" y1="647" x2="430.6" y2="732.2" stroke="#333" stroke-width="1.1"/>
<line x1="430.8" y1="747.6" x2="430.8" y2="792" stroke="#333" stroke-width="1.1"/>
<polygon points="427.4,658.5 433.8,658.5 430.6,664" fill="#111"/>
<line x1="427.4" y1="664.2" x2="433.8" y2="664.2" stroke="#111" stroke-width="1"/>
<polygon points="580.6,666 587.8,666 584.2,671.5" fill="#111"/>
<line x1="580.6" y1="671.7" x2="587.8" y2="671.7" stroke="#111" stroke-width="1"/>
<rect x="416.5" y="674.4" width="99.2" height="41.1" fill="#cfcffe" stroke="#222" stroke-width="1.1"/>
<line x1="430.6" y1="674.4" x2="430.6" y2="715.5" stroke="#333" stroke-width="1.1"/>
<path d="M430.6,684 a3,3.7 0 0 1 0,7.4 a3,3.7 0 0 1 0,7.4 a3,3.7 0 0 1 0,7.4" fill="none" stroke="#111" stroke-width="1.2"/>
<line x1="434" y1="695.3" x2="499" y2="695.3" stroke="#151515" stroke-width="1.3" stroke-dasharray="4.6 2.8"/>
<line x1="494.5" y1="674.4" x2="494.5" y2="684.5" stroke="#333" stroke-width="1.1"/>
<circle cx="494.4" cy="684.5" r="1.9" fill="#111"/>
<line x1="494.4" y1="684.5" x2="507.2" y2="706" stroke="#222" stroke-width="1.1"/>
<circle cx="507.2" cy="706.2" r="1.9" fill="#111"/>
<polygon points="502.2,703.6 506.8,704.8 505.6,699.8" fill="#111"/>
<circle cx="482.3" cy="705.8" r="1.9" fill="#111"/>
<line x1="482.3" y1="705.8" x2="482.3" y2="758.5" stroke="#222" stroke-width="1.2"/>
<circle cx="437.8" cy="739.2" r="10.3" fill="none" stroke="#333" stroke-width="1.1"/>
<line x1="437.8" y1="729.8" x2="437.8" y2="750" stroke="#333" stroke-width="1.2"/>
<line x1="437.8" y1="739.8" x2="456.4" y2="739.8" stroke="#333" stroke-width="1.1"/>
<line x1="456.4" y1="739.8" x2="456.4" y2="792" stroke="#333" stroke-width="1.1"/>
<line x1="430.8" y1="732.2" x2="437.8" y2="738.6" stroke="#333" stroke-width="1.1"/>
<line x1="437.8" y1="740.6" x2="430.8" y2="747.6" stroke="#333" stroke-width="1.1"/>
<polygon points="431.4,748 436.6,746.4 433.2,742.6" fill="#111"/>
<rect x="554.5" y="684.7" width="64.1" height="30.8" fill="#cfcffe" stroke="#222" stroke-width="1.1"/>
<text x="583.6" y="694.0" text-anchor="middle" font-size="7.65" fill="#4a4a4a">POWER</text>
<text x="583.6" y="703.2" text-anchor="middle" font-size="7.65" fill="#4a4a4a">SUPPLY</text>
<text x="583.6" y="712.4" text-anchor="middle" font-size="7.65" fill="#4a4a4a">CIRCUIT</text>
<line x1="584.2" y1="715.5" x2="584.2" y2="729.6" stroke="#333" stroke-width="1.1"/>
<rect x="562.2" y="729.6" width="44.3" height="20.8" fill="#cfcffe" stroke="#222" stroke-width="1.1"/>
<text x="583.5" y="743.2" text-anchor="middle" font-size="7.65" fill="#4a4a4a">CPU</text>
<line x1="584.2" y1="750.4" x2="584.2" y2="758.6" stroke="#333" stroke-width="1.1"/>
<rect x="469.4" y="758.6" width="149.2" height="17.2" fill="#cfcffe" stroke="#222" stroke-width="1.1"/>
<text x="541.6" y="770.9" text-anchor="middle" font-size="7.65" fill="#4a4a4a">INVERTER</text>
<line x1="507.4" y1="775.8" x2="507.4" y2="792" stroke="#333" stroke-width="1.1"/>
<line x1="597.4" y1="775.8" x2="597.4" y2="792" stroke="#333" stroke-width="1.1"/>
<polyline points="426.2,788.0 430.8,791.6 435.40000000000003,788.0" fill="none" stroke="#333" stroke-width="1"/>
<path d="M426.0,795.3 C428.40000000000003,798.29 433.2,798.29 435.6,795.3" fill="none" stroke="#333" stroke-width="1"/>
<polyline points="451.79999999999995,788.0 456.4,791.6 461.0,788.0" fill="none" stroke="#333" stroke-width="1"/>
<path d="M451.59999999999997,795.3 C454.0,798.29 458.79999999999995,798.29 461.2,795.3" fill="none" stroke="#333" stroke-width="1"/>
<polyline points="502.79999999999995,788.0 507.4,791.6 512.0,788.0" fill="none" stroke="#333" stroke-width="1"/>
<path d="M502.59999999999997,795.3 C505.0,798.29 509.79999999999995,798.29 512.1999999999999,795.3" fill="none" stroke="#333" stroke-width="1"/>
<polyline points="592.8,788.0 597.4,791.6 602.0,788.0" fill="none" stroke="#333" stroke-width="1"/>
<path d="M592.6,795.3 C595.0,798.29 599.8,798.29 602.1999999999999,795.3" fill="none" stroke="#333" stroke-width="1"/>
<text x="422.6" y="805.5" font-size="7.65" fill="#4a4a4a">6</text>
<text x="448.5" y="805.5" font-size="7.65" fill="#4a4a4a">9</text>
<text x="499.3" y="805.5" font-size="7.65" fill="#4a4a4a">5</text>
<text x="585.5" y="805.5" font-size="7.65" fill="#4a4a4a">12</text>
<text x="412.9" y="824" font-size="7.65" fill="#4a4a4a">BLK</text>
<text x="446.3" y="818.4" font-size="7.65" fill="#4a4a4a">(NOT</text>
<text x="444.7" y="826.7" font-size="7.65" fill="#4a4a4a">USED)</text>
<text x="489.8" y="824" font-size="7.65" fill="#4a4a4a">BLU</text>
<text x="577.6" y="824" font-size="7.65" fill="#4a4a4a">PNK</text>
<text x="500" y="845.4" font-size="7.65" fill="#4a4a4a">3</text>
<text x="591.3" y="845.4" font-size="7.65" fill="#4a4a4a">1</text>
<line x1="430.9" y1="797.5" x2="430.9" y2="849" stroke="#555" stroke-width="1.8"/>
<line x1="507.5" y1="797.5" x2="507.5" y2="848.2" stroke="#1818ff" stroke-width="1.8"/>
<line x1="504.5" y1="848.2" x2="510.5" y2="848.2" stroke="#333" stroke-width="1"/>
<line x1="597" y1="797.5" x2="597" y2="848.2" stroke="#f4879f" stroke-width="1.8"/>
<line x1="594" y1="848.2" x2="600" y2="848.2" stroke="#333" stroke-width="1"/>
</g></svg>
</body></html>
